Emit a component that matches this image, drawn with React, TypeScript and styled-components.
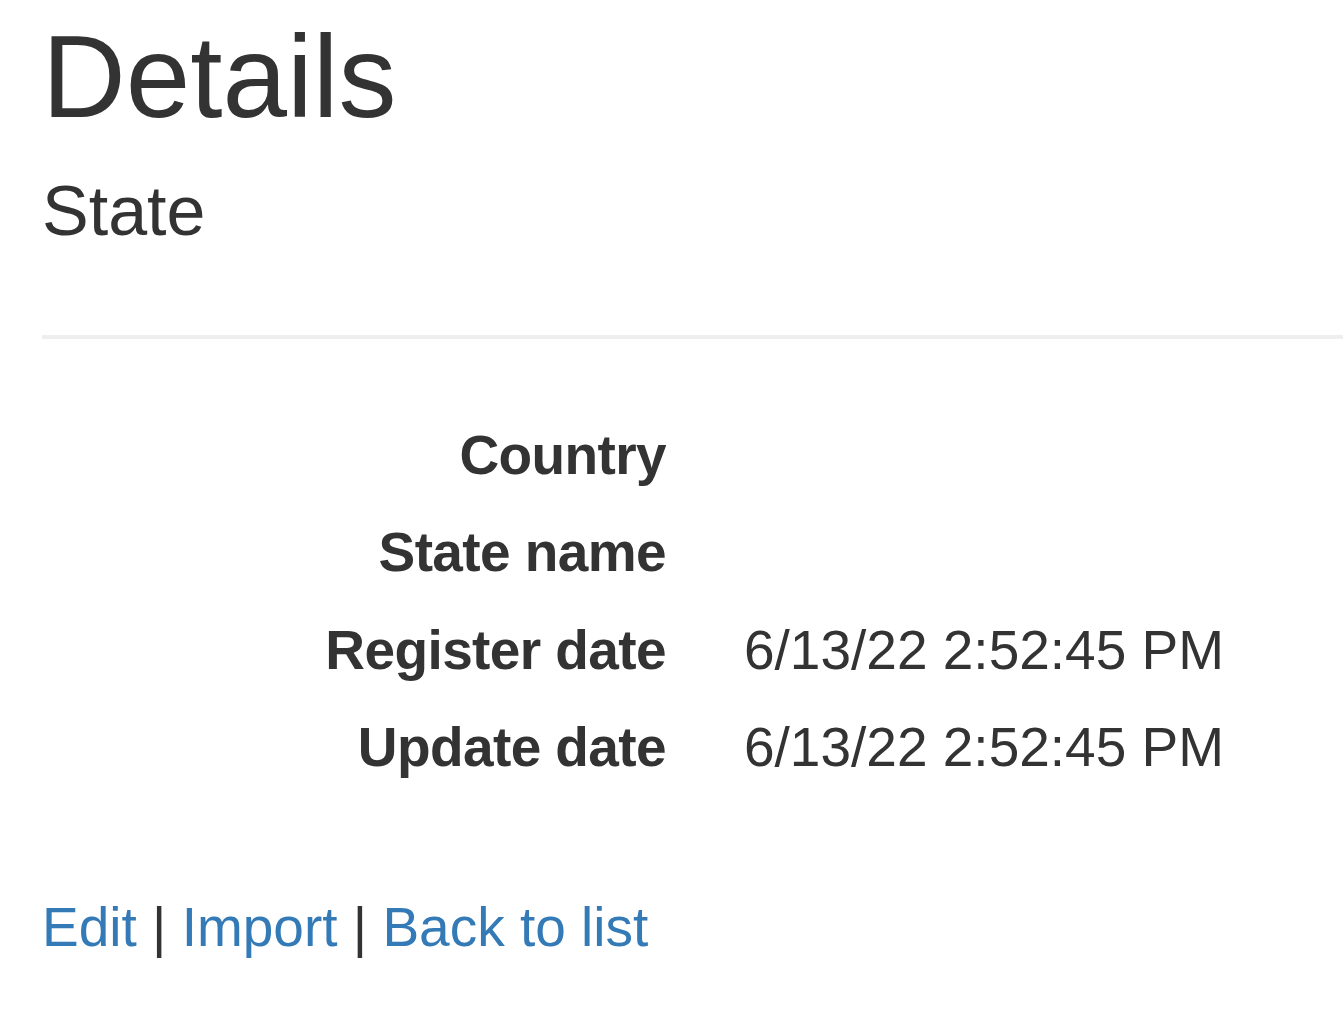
import { Fragment } from "react";
import styled, { createGlobalStyle } from "styled-components";

const GlobalStyle = createGlobalStyle`
  html, body {
    margin: 0;
    padding: 0;
    background: #fff;
  }
  body {
    font-family: "Liberation Sans", Arial, Helvetica, sans-serif;
    color: #333;
  }
`;

const Page = styled.main`
  padding: 14px 0 0 42px;
`;

const Title = styled.h2`
  margin: 0;
  font-size: 116px;
  font-weight: 400;
  line-height: 1.1;
`;

const Subtitle = styled.h4`
  margin: 31px 0 0;
  font-size: 70px;
  font-weight: 400;
  line-height: 1.1;
`;

const Rule = styled.hr`
  margin: 85px 0 0;
  height: 0;
  border: 0;
  border-top: 4px solid #eee;
`;

const DetailList = styled.dl`
  margin: 68px 0 0;
  display: grid;
  grid-template-columns: 624px 1fr;
  column-gap: 78px;
  grid-auto-rows: 97.5px;
  font-size: 55px;
  line-height: 97.5px;
`;

const Term = styled.dt`
  margin: 0;
  font-weight: 700;
  letter-spacing: -0.6px;
  text-align: right;
  white-space: nowrap;
  overflow: hidden;
  text-overflow: ellipsis;
`;

const Value = styled.dd`
  margin: 0;
  white-space: nowrap;
`;

const Actions = styled.p`
  margin: 91px 0 0;
  font-size: 55px;
  line-height: 78px;
`;

const ActionLink = styled.a`
  color: #337ab7;
  text-decoration: none;
  cursor: pointer;
`;

type Field = {
  label: string;
  value: string;
};

const fields: Field[] = [
  { label: "Country", value: "" },
  { label: "State name", value: "" },
  { label: "Register date", value: "6/13/22 2:52:45 PM" },
  { label: "Update date", value: "6/13/22 2:52:45 PM" },
];

export default function App() {
  return (
    <>
      <GlobalStyle />
      <Page>
        <Title>Details</Title>
        <Subtitle>State</Subtitle>
        <Rule />
        <DetailList>
          {fields.map((f) => (
            <Fragment key={f.label}>
              <Term>{f.label}</Term>
              <Value>{f.value}</Value>
            </Fragment>
          ))}
        </DetailList>
        <Actions>
          <ActionLink href="#">Edit</ActionLink> |{" "}
          <ActionLink href="#">Import</ActionLink> |{" "}
          <ActionLink href="#">Back to list</ActionLink>
        </Actions>
      </Page>
    </>
  );
}
